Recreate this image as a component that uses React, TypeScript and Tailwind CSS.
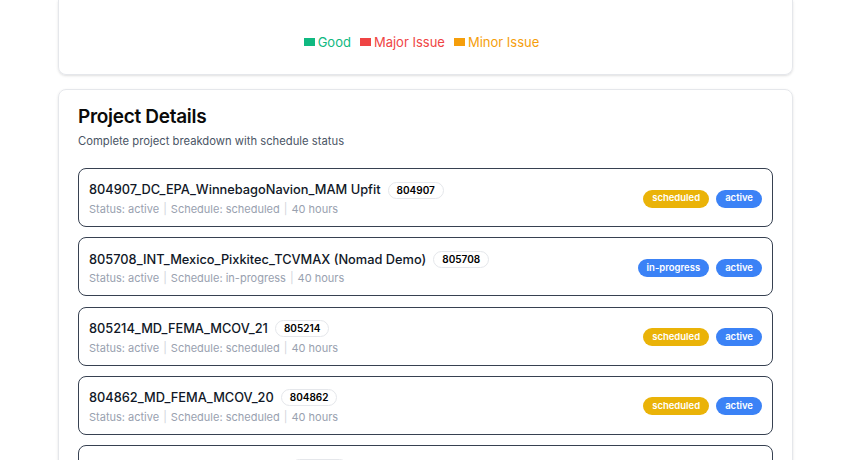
const PROJECTS = [
  { name: "804907_DC_EPA_WinnebagoNavion_MAM Upfit", id: "804907", schedule: "scheduled" },
  { name: "805708_INT_Mexico_Pixkitec_TCVMAX (Nomad Demo)", id: "805708", schedule: "in-progress" },
  { name: "805214_MD_FEMA_MCOV_21", id: "805214", schedule: "scheduled" },
  { name: "804862_MD_FEMA_MCOV_20", id: "804862", schedule: "scheduled" },
  { name: "805204_TX_Statler_Mahan_300", id: "805204", schedule: "scheduled" },
]

const LEGEND = [
  { label: "Good", swatch: "bg-[#10b981]", text: "text-[#10b981]" },
  { label: "Major Issue", swatch: "bg-[#ef4444]", text: "text-[#ef4444]" },
  { label: "Minor Issue", swatch: "bg-[#f59e0b]", text: "text-[#f59e0b]" },
]

function ProjectRow({ name, id, schedule }: { name: string; id: string; schedule: string }) {
  return (
    <div className="flex items-center justify-between rounded-lg border border-[#374151] pl-2.5 pr-2.5 pt-[11px] pb-[9px]">
      <div>
        <div className="flex h-5 items-center">
          <span className="text-[12.8px] font-medium text-[#111827]">{name}</span>
          <span className="ml-[7px] rounded-full border border-gray-200 px-2 py-px text-[10px] font-semibold leading-[13px] text-black">
            {id}
          </span>
        </div>
        <div className="mt-px text-[11px] leading-4 text-gray-400">
          Status: active<span className="mx-1 text-gray-300">|</span>Schedule: {schedule}
          <span className="mx-1 text-gray-300">|</span>40 hours
        </div>
      </div>
      <div className="flex items-center gap-[7px]">
        <span
          className={
            schedule === "scheduled"
              ? "flex h-[18px] items-center rounded-full bg-[#eab308] px-[9px] text-[9.5px] font-semibold text-white"
              : "flex h-[18px] items-center rounded-full bg-[#3b82f6] px-[9px] text-[9.5px] font-semibold text-white"
          }
        >
          {schedule}
        </span>
        <span className="flex h-[18px] items-center rounded-full bg-[#3b82f6] px-[9px] text-[9.5px] font-semibold text-white">
          active
        </span>
      </div>
    </div>
  )
}

export default function App() {
  return (
    <div className="h-[460px] overflow-hidden bg-white font-['Inter',sans-serif]">
      <div className="ml-[58px] flex w-[735px] flex-col gap-3.5">
        {/* Chart card, scrolled past its top */}
        <div className="flex h-[75px] items-start justify-center rounded-b-lg border border-t-0 border-gray-200 pt-[34px] pr-2 shadow-sm">
          <div className="flex items-center gap-[9px]">
            {LEGEND.map((item) => (
              <div key={item.label} className="flex items-center gap-[3px]">
                <span className={`h-[8px] w-[11px] ${item.swatch}`} />
                <span className={`text-[13px] leading-4 ${item.text}`}>{item.label}</span>
              </div>
            ))}
          </div>
        </div>

        {/* Project details */}
        <div className="rounded-lg border border-gray-200 px-[19px] pt-[17px] shadow-sm">
          <h2 className="text-[19px] leading-5 font-semibold tracking-[-0.3px] text-[#0a0a0a]">Project Details</h2>
          <p className="mt-1.5 text-[11.25px] leading-4 text-gray-600">Complete project breakdown with schedule status</p>
          <div className="mt-[19px] flex flex-col gap-[10.3px] pb-6">
            {PROJECTS.map((p) => (
              <ProjectRow key={p.id} {...p} />
            ))}
          </div>
        </div>
      </div>
    </div>
  )
}
